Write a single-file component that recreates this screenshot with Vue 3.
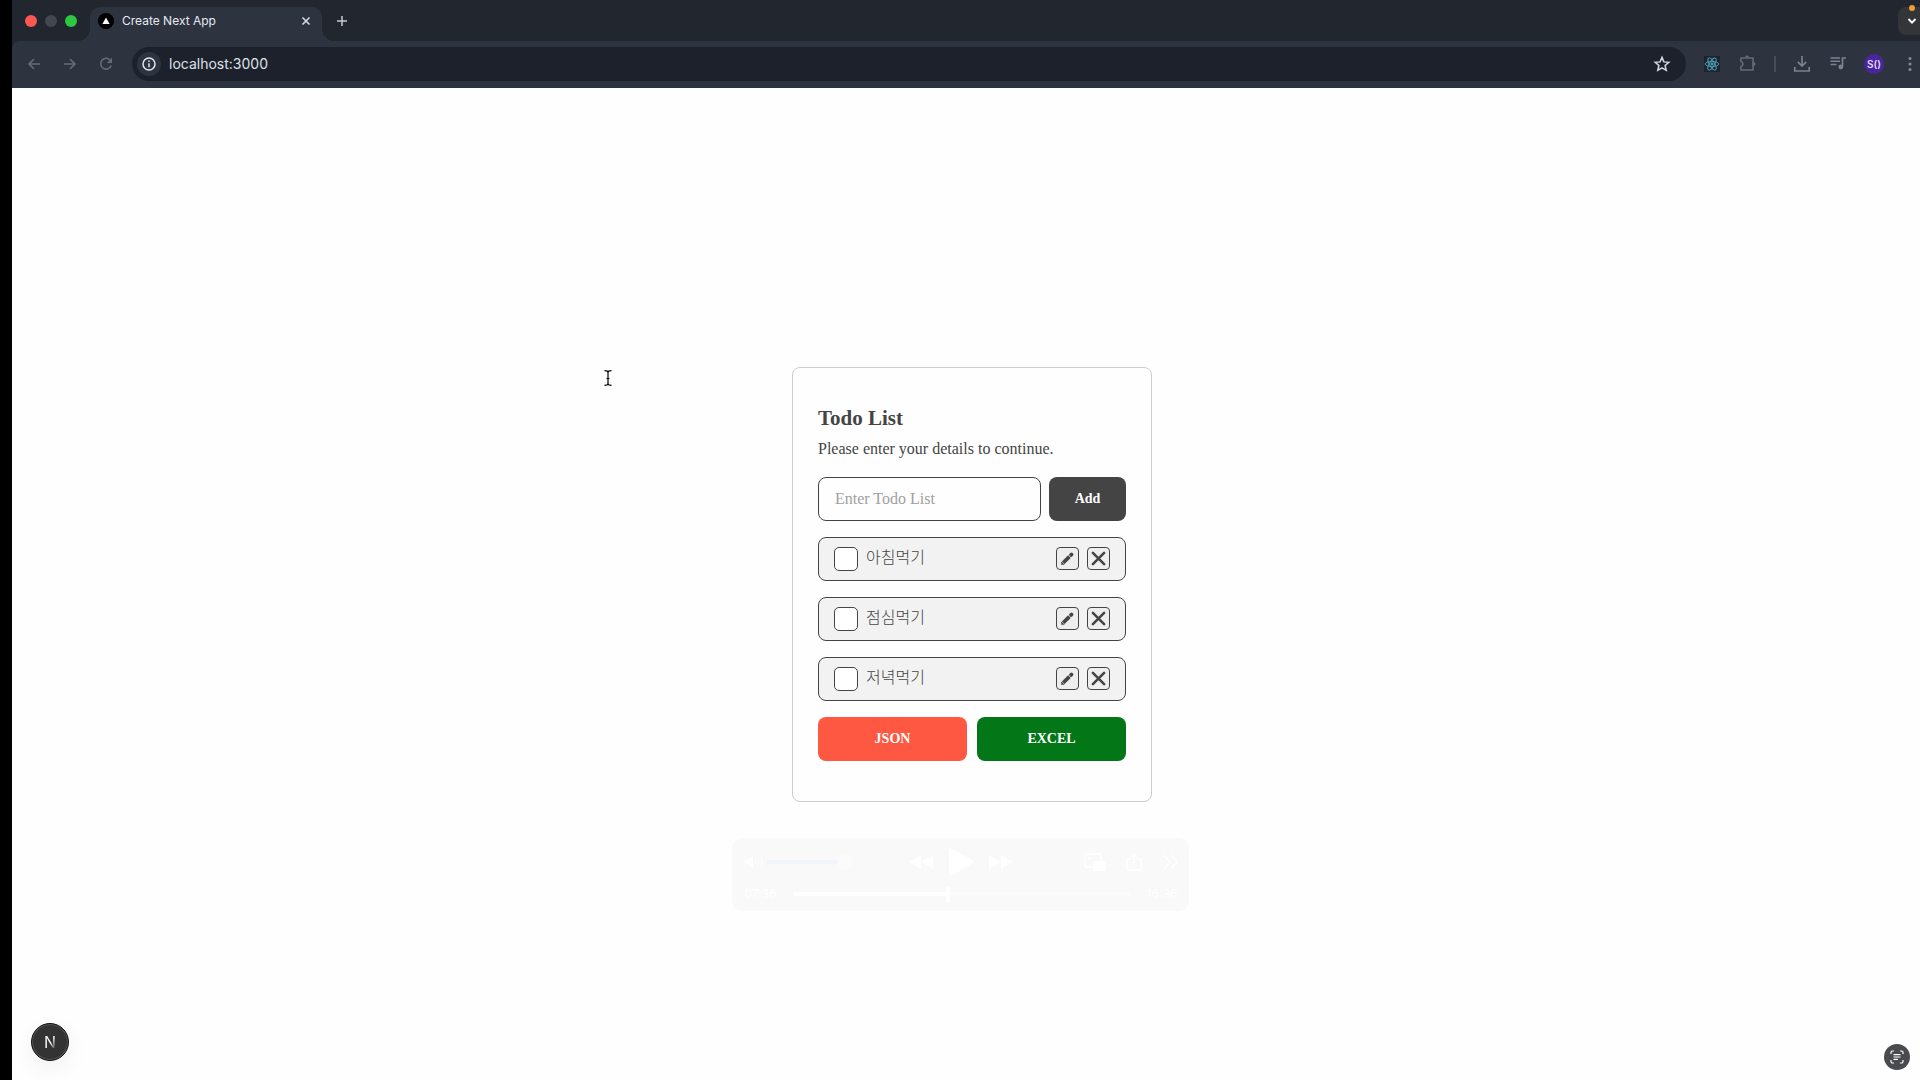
<template>
  <div class="screen">
    <div class="browser">
      <header class="tab_strip">
        <div class="lights">
          <span class="light red"></span>
          <span class="light gray"></span>
          <span class="light green"></span>
        </div>
        <div class="tab">
          <svg class="favicon" viewBox="0 0 16 16"><circle cx="8" cy="8" r="8" fill="#000" /><path d="M8 4.4 11.6 11H4.4z" fill="#fff" /></svg>
          <span class="tab_title">Create Next App</span>
          <button type="button" class="tab_close" aria-label="Close tab">
            <svg viewBox="0 0 16 16"><path d="M4.5 4.5l7 7M11.5 4.5l-7 7" stroke="#d5d9e2" stroke-width="1.6" /></svg>
          </button>
        </div>
        <button type="button" class="new_tab" aria-label="New tab">
          <svg viewBox="0 0 16 16"><path d="M8 3v10M3 8h10" stroke="#c6cad3" stroke-width="1.5" /></svg>
        </button>
        <button type="button" class="tab_search" aria-label="Search tabs">
          <svg viewBox="0 0 16 16"><path d="M4.5 6 8 9.6 11.5 6" fill="none" stroke="#fff" stroke-width="1.8" /></svg>
          <span class="rec_dot"></span>
        </button>
      </header>

      <nav class="toolbar">
        <button type="button" class="tool" aria-label="Back">
          <svg viewBox="0 0 16 16"><path d="M14 8H3M8 3 3 8l5 5" fill="none" stroke="#666b78" stroke-width="1.6" /></svg>
        </button>
        <button type="button" class="tool" aria-label="Forward">
          <svg viewBox="0 0 16 16"><path d="M2 8h11M8 3l5 5-5 5" fill="none" stroke="#666b78" stroke-width="1.6" /></svg>
        </button>
        <button type="button" class="tool" aria-label="Reload">
          <svg viewBox="0 0 16 16"><path d="M12.4 4.4A5.4 5.4 0 1 0 13.2 9.5" fill="none" stroke="#666b78" stroke-width="1.6" /><path d="M14 1.8V7H8.8z" fill="#666b78" /></svg>
        </button>
        <div class="address">
          <button type="button" class="site_info" aria-label="Site information">
            <svg viewBox="0 0 16 16"><circle cx="8" cy="8" r="6" fill="none" stroke="#e3e6ee" stroke-width="1.5" /><path d="M8 7.2v4M8 4.6v1.5" stroke="#e3e6ee" stroke-width="1.5" /></svg>
          </button>
          <input v-model="url" class="url" type="text" aria-label="Address" />
          <button type="button" class="star" aria-label="Bookmark">
            <svg viewBox="0 0 18 18"><path d="M9 2.4l1.9 4.5 4.9.4-3.7 3.2 1.1 4.8L9 12.8l-4.2 2.5 1.1-4.8-3.7-3.2 4.900-.4z" fill="none" stroke="#d5d9e2" stroke-width="1.5" /></svg>
          </button>
        </div>
        <button type="button" class="tool" aria-label="React tools">
          <svg viewBox="0 0 16 16">
            <rect width="16" height="16" fill="#1e242c" />
            <g fill="none" stroke="#4fa3c4" stroke-width="0.9">
              <ellipse cx="8" cy="8" rx="6.8" ry="2.6" />
              <ellipse cx="8" cy="8" rx="6.8" ry="2.6" transform="rotate(60 8 8)" />
              <ellipse cx="8" cy="8" rx="6.8" ry="2.6" transform="rotate(120 8 8)" />
            </g>
            <circle cx="8" cy="8" r="1.4" fill="#4fa3c4" />
          </svg>
        </button>
        <button type="button" class="tool" aria-label="Extensions">
          <svg class="big" viewBox="0 0 18 18"><path d="M2 3h12v12H2v-3.500c2.500-.5 2.500-4.500 0-5z" fill="none" stroke="#666b78" stroke-width="1.6" stroke-linejoin="round" /><path d="M6 2.600a2 2 0 0 1 4 0zM14.500 7a2 2 0 0 1 0 4z" fill="#666b78" /></svg>
        </button>
        <span class="divider"></span>
        <button type="button" class="tool" aria-label="Downloads">
          <svg class="big" viewBox="0 0 18 18"><path d="M9 1v9.5M4.8 6.8 9 11l4.2-4.2M1.8 12v4h14.4v-4" fill="none" stroke="#7c818e" stroke-width="1.7" /></svg>
        </button>
        <button type="button" class="tool" aria-label="Media controls">
          <svg class="big" viewBox="0 0 18 18"><path d="M1.5 3H11M1.5 6.300H11M1.5 9.600H7.5" stroke="#7c818e" stroke-width="1.5" /><path d="M17 3h-3.500v9" fill="none" stroke="#7c818e" stroke-width="1.7" /><circle cx="11.8" cy="12" r="2.4" fill="#7c818e" /></svg>
        </button>
        <button type="button" class="tool" aria-label="Profile">
          <span class="avatar">S()</span>
        </button>
        <button type="button" class="tool" aria-label="Menu">
          <svg viewBox="0 0 16 16" fill="#868b98"><circle cx="8" cy="2.5" r="1.5" /><circle cx="8" cy="8" r="1.5" /><circle cx="8" cy="13.5" r="1.5" /></svg>
        </button>
      </nav>

      <main class="page">
        <section class="card">
          <div class="card_head">
            <h1>Todo List</h1>
            <p>Please enter your details to continue.</p>
          </div>

          <form class="add_form" @submit.prevent="addTodo">
            <input v-model="draft" type="text" placeholder="Enter Todo List" aria-label="Enter Todo List" />
            <button type="submit">Add</button>
          </form>

          <ul class="todos">
            <li v-for="todo in todos" :key="todo.id" class="todo">
              <input :id="'todo-' + todo.id" v-model="todo.done" type="checkbox" />
              <label :for="'todo-' + todo.id">{{ todo.text }}</label>
              <button type="button" aria-label="Edit">
                <svg viewBox="0 0 16 16" stroke="#444"><path d="M3.500 12.500 10 6" stroke-width="4" /><path d="M1.500 14.500v-3l3 3z" fill="#444" stroke-width="0.5" /><path d="M11.800 4.200l.5-.5" stroke-width="4" stroke-linecap="round" /></svg>
              </button>
              <button type="button" aria-label="Delete" @click="removeTodo(todo.id)">
                <svg viewBox="0 0 16 16"><path d="M2 2l12 12M14 2 2 14" stroke="#444" stroke-width="2.7" stroke-linecap="round" /></svg>
              </button>
            </li>
          </ul>

          <div class="exports">
            <button type="button" class="json">JSON</button>
            <button type="button" class="excel">EXCEL</button>
          </div>
        </section>
      </main>
    </div>

    <button type="button" class="next_badge" aria-label="Next.js dev tools"><span>N</span></button>

    <button type="button" class="scan_badge" aria-label="Scan text">
      <svg viewBox="0 0 16 16" fill="none" stroke="#fff" stroke-width="1.2"><path d="M2 5V3.5A1.5 1.5 0 0 1 3.5 2H5M11 2h1.5A1.5 1.5 0 0 1 14 3.5V5M14 11v1.5a1.5 1.5 0 0 1-1.5 1.5H11M5 14H3.5A1.5 1.5 0 0 1 2 12.5V11M4.5 5.7h7M4.5 8h7M4.5 10.3h4.5" /></svg>
    </button>

    <svg class="cursor" viewBox="0 0 8 16" fill="none" stroke="#000" stroke-width="1.2"><path d="M.5.7C2.5.7 4 1.2 4 2.5v11c0 1.3-1.5 1.8-3.5 1.8M7.5.7C5.5.7 4 1.2 4 2.5v11c0 1.3 1.5 1.8 3.5 1.8M2.5 8.5h3" /></svg>

    <div class="player">
      <div class="player_top">
        <div class="volume">
          <svg viewBox="0 0 18 12" width="18" height="12"><path d="M0 4h3l5-4v12L3 8H0z" fill="#fff" /><path d="M10.5 3.5q1.5 2.5 0 5M13 2.2q2.4 3.8 0 7.6M15.5 1q3.2 5 0 10" fill="none" stroke="#fff" /></svg>
          <input v-model="volume" type="range" aria-label="Volume" />
        </div>
        <div class="transport">
          <button type="button" aria-label="Rewind"><svg viewBox="0 0 24 14" width="24" height="14" fill="#fff"><path d="M12 0v14L0 7zM24 0v14L12 7z" /></svg></button>
          <button type="button" aria-label="Play"><svg viewBox="0 0 24 28" width="24" height="28" fill="#fff"><path d="M0 2Q0-1 3 1l20 11q2 2 0 4L3 27q-3 2-3-1z" /></svg></button>
          <button type="button" aria-label="Forward"><svg viewBox="0 0 24 14" width="24" height="14" fill="#fff"><path d="M0 0v14l12-7zM12 0v14l12-7z" /></svg></button>
        </div>
        <div class="extras">
          <button type="button" aria-label="Picture in picture"><svg viewBox="0 0 22 18" width="22" height="18"><path d="M8 14H3a2 2 0 0 1-2-2V3a2 2 0 0 1 2-2h12a2 2 0 0 1 2 2v4" fill="none" stroke="#fff" stroke-width="1.4" /><rect x="9" y="8" width="13" height="10" rx="2" fill="#fff" /><circle cx="5.5" cy="5.5" r="1.8" fill="#fff" /></svg></button>
          <button type="button" aria-label="Share"><svg viewBox="0 0 16 18" width="16" height="18" fill="none" stroke="#fff" stroke-width="1.4"><path d="M5 6H3a2 2 0 0 0-2 2v7a2 2 0 0 0 2 2h10a2 2 0 0 0 2-2V8a2 2 0 0 0-2-2h-2M8 12V1M5 4l3-3 3 3" /></svg></button>
          <button type="button" aria-label="More"><svg viewBox="0 0 16 16" width="16" height="16" fill="none" stroke="#fff" stroke-width="1.4"><path d="M2 1l6 7-6 7M9 1l6 7-6 7" /></svg></button>
        </div>
      </div>
      <div class="player_bottom">
        <span>07:36</span>
        <input v-model="position" type="range" aria-label="Position" :style="{ '--played': position + '%' }" />
        <span>16:36</span>
      </div>
    </div>
  </div>
</template>

<script setup>
import { ref } from 'vue';

const url = ref('localhost:3000');
const draft = ref('');
const volume = ref(100);
const position = ref(46);

const todos = ref([
  { id: 1, text: '아침먹기', done: false },
  { id: 2, text: '점심먹기', done: false },
  { id: 3, text: '저녁먹기', done: false }
]);

const addTodo = () => {
  if (!draft.value.trim()) return;
  todos.value.push({ id: Date.now(), text: draft.value.trim(), done: false });
  draft.value = '';
};

const removeTodo = (id) => {
  todos.value = todos.value.filter((todo) => todo.id !== id);
};
</script>

<style>
body {
  background: #000;
}
</style>

<style scoped>
* {
  box-sizing: border-box;
}

button,
input {
  margin: 0;
  padding: 0;
  border: none;
  background: none;
  font: inherit;
  color: inherit;
}

button {
  cursor: pointer;
}

svg {
  display: block;
}

/* the window runs past the right edge of the screen */
.screen {
  position: relative;
  display: flex;
  min-height: 100vh;
  padding-left: 12px;
  overflow: hidden;
  font-family: Inter, "Noto Sans CJK KR", sans-serif;
}

.browser {
  flex: 0 0 100vw;
  display: flex;
  flex-direction: column;
  background: #21262f;
}

/* tabs */
.tab_strip {
  display: flex;
  align-items: flex-end;
  height: 41px;
  padding: 0 6px 0 13px;
}

.lights {
  display: flex;
  align-self: center;
  gap: 8px;
  width: 65px;
}

.light {
  width: 12px;
  height: 12px;
  border-radius: 50%;
}

.light.red { background: #fe5751; }
.light.gray { background: #44474f; }
.light.green { background: #2bc840; }

.tab {
  position: relative;
  display: flex;
  align-items: center;
  width: 232px;
  height: 34px;
  padding: 0 8px 6px;
  border-radius: 10px 10px 0 0;
  background: #2e3340;
}

.tab::before,
.tab::after {
  content: "";
  position: absolute;
  bottom: 0;
  width: 12px;
  height: 12px;
}

.tab::before {
  right: 100%;
  background: radial-gradient(circle at 0 0, transparent 12px, #2e3340 12px);
}

.tab::after {
  left: 100%;
  background: radial-gradient(circle at 100% 0, transparent 12px, #2e3340 12px);
}

.favicon {
  width: 16px;
  height: 16px;
}

.tab_title {
  flex: 1;
  margin-left: 8px;
  font-size: 12px;
  line-height: 16px;
  color: #e6e9f0;
}

.tab_close svg,
.new_tab svg,
.tab_search svg {
  width: 16px;
  height: 16px;
}

.new_tab {
  align-self: center;
  margin-left: 12px;
}

.tab_search {
  position: relative;
  align-self: center;
  display: grid;
  place-items: center;
  width: 28px;
  height: 28px;
  margin-left: auto;
  border-radius: 8px;
  background: #333538;
}

.rec_dot {
  position: absolute;
  top: -2px;
  left: 11px;
  width: 6px;
  height: 6px;
  border-radius: 50%;
  background: #f29a38;
}

/* toolbar */
.toolbar {
  display: flex;
  align-items: center;
  height: 47px;
  padding: 0 4px 1px;
  border-radius: 8px 0 0 0;
  background: #2e3340;
}

.tool {
  display: grid;
  place-items: center;
  width: 36px;
  height: 36px;
}

.tool svg {
  width: 16px;
  height: 16px;
}

.tool svg.big {
  width: 18px;
  height: 18px;
}

.address {
  flex: 1;
  display: flex;
  align-items: center;
  height: 34px;
  margin: 0 8px;
  padding: 0 15px 0 5px;
  border-radius: 17px;
  background: #1c212c;
}

.site_info {
  display: grid;
  place-items: center;
  width: 24px;
  height: 24px;
  border-radius: 50%;
  background: #2e3340;
}

.site_info svg {
  width: 16px;
  height: 16px;
}

.url {
  flex: 1;
  margin-left: 8px;
  font-size: 14px;
  line-height: 20px;
  color: #dfe2ea;
  outline: none;
}

.star svg {
  width: 18px;
  height: 18px;
}

.divider {
  width: 2px;
  height: 16px;
  margin: 0 8px;
  background: #474c59;
}

.avatar {
  display: grid;
  place-items: center;
  width: 20px;
  height: 20px;
  border-radius: 50%;
  background: #4a259f;
  font-size: 10px;
  font-weight: 600;
  color: #e4dcf6;
}

/* page */
.page {
  flex: 1;
  display: flex;
  align-items: center;
  justify-content: center;
  background: #fefefe;
}

.card {
  display: flex;
  flex-direction: column;
  gap: 16px;
  width: 360px;
  padding: 40px 25px;
  border: 1px solid #ccc;
  border-radius: 8px;
  font-family: "Liberation Serif", "Noto Sans CJK KR", serif;
  color: #444;
}

.card_head h1 {
  margin: 0 0 9px;
  font-size: 21px;
  font-weight: 700;
  line-height: 20px;
}

.card_head p {
  margin: 0;
  font-size: 16px;
  line-height: 24px;
}

.add_form {
  display: flex;
  gap: 8px;
}

.add_form input {
  flex: 1;
  min-width: 0;
  height: 44px;
  padding: 0 16px;
  border: 1px solid #444;
  border-radius: 8px;
  font-size: 16px;
}

.add_form input::placeholder {
  color: #a0a0a0;
}

.add_form button {
  width: 77px;
  border-radius: 8px;
  background: #444;
  font-size: 14px;
  font-weight: 700;
  color: #fff;
}

.todos {
  display: flex;
  flex-direction: column;
  gap: 16px;
  margin: 0;
  padding: 0;
  list-style: none;
}

.todo {
  display: flex;
  align-items: center;
  gap: 8px;
  height: 44px;
  padding: 0 15px;
  border: 1px solid #444;
  border-radius: 8px;
  background: #f2f2f2;
}

.todo input {
  appearance: none;
  width: 24px;
  height: 24px;
  border: 1px solid #444;
  border-radius: 5px;
  background: #fff;
}

.todo input:checked {
  background: #444;
}

.todo label {
  flex: 1;
  padding-bottom: 2px;
  font-size: 16px;
  font-weight: 300;
  line-height: 24px;
}

.todo button {
  display: grid;
  place-items: center;
  width: 23px;
  height: 23px;
  border: 1px solid #444;
  border-radius: 4px;
  background: #eee;
}

.todo svg {
  width: 15px;
  height: 15px;
}

.exports {
  display: flex;
  gap: 10px;
}

.exports button {
  flex: 1;
  height: 44px;
  border-radius: 8px;
  font-size: 14px;
  font-weight: 700;
  color: #fff;
}

.exports .json { background: #ff5842; }
.exports .excel { background: #037618; }

/* floating badges */
.next_badge {
  position: absolute;
  left: 31px;
  bottom: 19px;
  width: 38px;
  height: 38px;
  border: 1px solid #111;
  border-radius: 50%;
  background: #333;
  box-shadow: inset 0 0 0 1px #555, 0 8px 24px rgba(0, 0, 0, .06);
}

.next_badge span {
  font-size: 16px;
  line-height: 20px;
  color: transparent;
  background: linear-gradient(to bottom right, #fff 55%, #444 85%);
  background-clip: text;
}

.scan_badge {
  position: absolute;
  right: 10px;
  bottom: 10px;
  display: grid;
  place-items: center;
  width: 26px;
  height: 26px;
  border-radius: 50%;
  background: #4a4b4f;
}

.scan_badge svg {
  width: 16px;
  height: 16px;
}

.cursor {
  position: absolute;
  left: 604px;
  top: 370px;
  width: 8px;
  height: 16px;
}

/* video controls, faded out over the page */
.player {
  position: absolute;
  left: 0;
  right: 0;
  bottom: 169px;
  width: 457px;
  height: 73px;
  margin: 0 auto;
  padding: 9px 11px 4px 13px;
  border-radius: 10px;
  background: #f9f9f9;
  color: #fff;
}

.player_top {
  display: grid;
  grid-template-columns: 1fr auto 1fr;
  align-items: center;
  height: 30px;
}

.volume,
.transport,
.extras,
.player_bottom {
  display: flex;
  align-items: center;
}

.volume {
  gap: 4px;
}

.transport {
  gap: 16px;
}

.extras {
  justify-content: flex-end;
  gap: 20px;
}

.player_bottom {
  gap: 16px;
  height: 34px;
  font-size: 12px;
  line-height: 16px;
}

.player input {
  appearance: none;
  height: 4px;
  border-radius: 2px;
}

.volume input {
  width: 86px;
  background: #eff5fb;
}

.volume input::-webkit-slider-thumb {
  appearance: none;
  width: 16px;
  height: 16px;
  border-radius: 50%;
  background: #fbfbfb;
}

.player_bottom input {
  flex: 1;
  min-width: 0;
  background: linear-gradient(to right, #fff var(--played), #fbfbfb var(--played));
}

.player_bottom input::-webkit-slider-thumb {
  appearance: none;
  width: 4px;
  height: 17px;
  border-radius: 2px;
  background: #fff;
}
</style>
